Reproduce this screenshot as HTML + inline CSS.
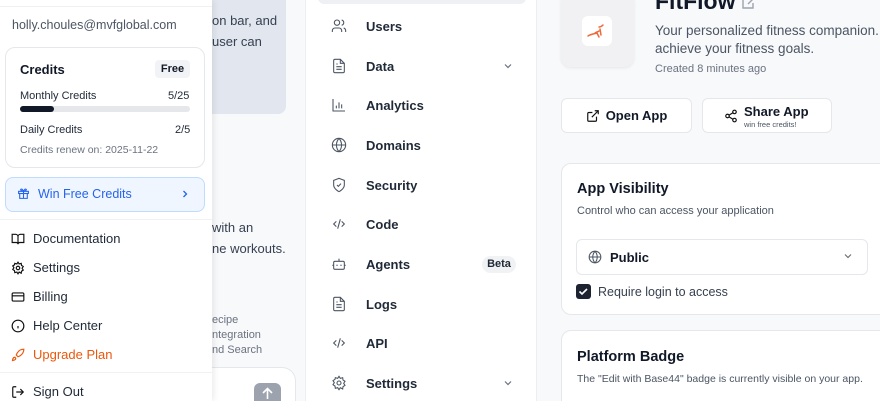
<!DOCTYPE html>
<html style="width:880px;height:401px;overflow:hidden"><head><meta charset="utf-8"><style>
*{box-sizing:border-box;margin:0;padding:0}
body{width:880px;height:401px;overflow:hidden;font-family:"Liberation Sans",sans-serif;background:#f8f9fb;position:relative;color:#111827}
.abs{position:absolute}
svg{display:block}
.menu{left:0;top:0;width:212px;height:401px;background:#fff;box-shadow:2px 0 6px rgba(0,0,0,.08)}
.nav{left:305px;top:0;width:232px;height:401px;background:#fff;border-left:1px solid #eceef1;border-right:1px solid #eceef1;overflow:hidden}
.ni{position:absolute;left:25px;display:flex;align-items:center;font-size:13px;font-weight:bold;color:#1f2937}
.ni svg{margin-right:19px}
.mi{position:absolute;left:11px;display:flex;align-items:center;font-size:13px;color:#1f2937}
.mi svg{margin-right:8px}
.card{background:#fff;border:1px solid #e5e7eb;border-radius:10px}
</style></head><body>
<!-- chat column -->
<div class="abs" style="left:212px;top:0;width:93px;height:401px;background:#f8f9fb"></div>
<div class="abs" style="left:200px;top:-10px;width:86px;height:124px;background:#e2e6ee;border-radius:8px"></div>
<div class="abs" style="left:212px;top:10px;font-size:13px;color:#374151;line-height:21px">on bar, and<br>user can</div>
<div class="abs" style="left:212px;top:217px;font-size:13px;color:#374151;line-height:21px">with an<br>ne workouts.</div>
<div class="abs" style="left:212px;top:313px;font-size:11px;color:#6b7280;line-height:15px">ecipe<br>ntegration<br>nd Search</div>
<div class="abs" style="left:190px;top:367px;width:106px;height:50px;background:#fff;border:1px solid #e5e7eb;border-radius:14px"></div>
<div class="abs" style="left:254px;top:383px;width:27px;height:27px;background:#9ca3af;border-radius:6px"><svg width="27" height="20" viewBox="0 0 27 20"><path d="M13.5 6v10M9 10l4.5-4.5L18 10" stroke="#fff" stroke-width="1.6" fill="none"/></svg></div>

<!-- nav -->
<div class="abs nav">
<div class="abs" style="left:12px;top:-10px;width:208px;height:14px;background:#eef0f3;border-radius:6px"></div>
<div class="ni" style="top:18px"><svg width="16" height="16" viewBox="0 0 24 24" fill="none" stroke="#4b5563" stroke-width="1.6"><circle cx="9" cy="7" r="4"/><path d="M2 21v-2a4 4 0 0 1 4-4h6a4 4 0 0 1 4 4v2M16 3.1a4 4 0 0 1 0 7.8M22 21v-2a4 4 0 0 0-3-3.9"/></svg>Users</div>
<div class="ni" style="top:58px"><svg width="16" height="16" viewBox="0 0 24 24" fill="none" stroke="#4b5563" stroke-width="1.6"><path d="M14 2H6a2 2 0 0 0-2 2v16a2 2 0 0 0 2 2h12a2 2 0 0 0 2-2V8z"/><path d="M14 2v6h6M8 13h8M8 17h8M8 9h2"/></svg>Data</div>
<svg class="abs" style="left:197px;top:61px" width="10" height="10" viewBox="0 0 10 10"><path d="M2 3.5l3 3 3-3" stroke="#6b7280" fill="none" stroke-width="1.2"/></svg>
<div class="ni" style="top:97px"><svg width="16" height="16" viewBox="0 0 24 24" fill="none" stroke="#4b5563" stroke-width="1.6"><path d="M3 3v18h18M8 17v-4M12 17V8M16 17v-6"/></svg>Analytics</div>
<div class="ni" style="top:137px"><svg width="16" height="16" viewBox="0 0 24 24" fill="none" stroke="#4b5563" stroke-width="1.6"><circle cx="12" cy="12" r="10"/><path d="M2 12h20M12 2a15 15 0 0 1 0 20M12 2a15 15 0 0 0 0 20"/></svg>Domains</div>
<div class="ni" style="top:177px"><svg width="16" height="16" viewBox="0 0 24 24" fill="none" stroke="#4b5563" stroke-width="1.6"><path d="M12 22s8-4 8-10V5l-8-3-8 3v7c0 6 8 10 8 10z"/><path d="M9 12l2 2 4-4"/></svg>Security</div>
<div class="ni" style="top:216px"><svg width="16" height="16" viewBox="0 0 24 24" fill="none" stroke="#4b5563" stroke-width="1.6"><path d="M8 8l-4 4 4 4M16 8l4 4-4 4M14 5l-4 14"/></svg>Code</div>
<div class="ni" style="top:256px"><svg width="16" height="16" viewBox="0 0 24 24" fill="none" stroke="#4b5563" stroke-width="1.6"><rect x="4" y="8" width="16" height="12" rx="2"/><path d="M12 8V4M2 14h2M20 14h2M9 13v2M15 13v2"/></svg>Agents</div>
<div class="abs" style="left:176px;top:256px;width:34px;height:17px;background:#f1f2f4;border-radius:9px;font-size:11px;font-weight:bold;text-align:center;line-height:17px;color:#1f2937">Beta</div>
<div class="ni" style="top:296px"><svg width="16" height="16" viewBox="0 0 24 24" fill="none" stroke="#4b5563" stroke-width="1.6"><path d="M14 2H6a2 2 0 0 0-2 2v16a2 2 0 0 0 2 2h12a2 2 0 0 0 2-2V8z"/><path d="M14 2v6h6M8 13h8M8 17h8M8 9h2"/></svg>Logs</div>
<div class="ni" style="top:335px"><svg width="16" height="16" viewBox="0 0 24 24" fill="none" stroke="#4b5563" stroke-width="1.6"><path d="M8 8l-4 4 4 4M16 8l4 4-4 4M14 5l-4 14"/></svg>API</div>
<div class="ni" style="top:375px"><svg width="16" height="16" viewBox="0 0 24 24" fill="none" stroke="#4b5563" stroke-width="1.6"><circle cx="12" cy="12" r="3"/><path d="M12 2l2 3 3.5-1 .5 3.5 3 2-2 3 2 3-3 2-.5 3.5L14 19l-2 3-2-3-3.5 1L6 16.5l-3-2 2-3-2-3 3-2L6.5 4 10 5z"/></svg>Settings</div>
<svg class="abs" style="left:197px;top:378px" width="10" height="10" viewBox="0 0 10 10"><path d="M2 3.5l3 3 3-3" stroke="#6b7280" fill="none" stroke-width="1.2"/></svg>
</div>

<!-- main -->
<div class="abs" style="left:561px;top:-8px;width:73px;height:75px;background:#f1f1f3;border-radius:10px;box-shadow:0 1px 3px rgba(0,0,0,.08)"></div>
<div class="abs" style="left:582px;top:16px;width:30px;height:30px;background:#fff;border-radius:6px"><svg width="30" height="30" viewBox="0 0 30 30"><path d="M6 20c3-2 6-2 9-3M15 17l2 4M13 17c1-1 3-1 4-2M18 13l1 6M17 11c2 0 3-1 4-2" stroke="#ee6a3a" stroke-width="1.5" fill="none" stroke-linecap="round"/></svg></div>
<div class="abs" style="left:655px;top:-12px;font-size:23px;font-weight:bold;color:#111827">FitFlow</div>
<svg class="abs" style="left:741px;top:-4px" width="16" height="14" viewBox="0 0 16 14"><path d="M2 2h6M2 2v10h10V7M7 8l6-6" stroke="#9ca3af" stroke-width="1.4" fill="none"/></svg>
<div class="abs" style="left:655px;top:22px;font-size:13.5px;color:#4b5563;line-height:18px;white-space:nowrap">Your personalized fitness companion. Dis<br>achieve your fitness goals.</div>
<div class="abs" style="left:655px;top:63px;font-size:11px;color:#6b7280">Created 8 minutes ago</div>
<div class="abs card" style="left:561px;top:98px;width:131px;height:35px;border-radius:6px;display:flex;align-items:center;justify-content:center;font-size:13px;font-weight:bold"><svg width="14" height="14" viewBox="0 0 24 24" fill="none" stroke="#111" stroke-width="2" style="margin-right:6px"><path d="M18 13v6a2 2 0 0 1-2 2H5a2 2 0 0 1-2-2V8a2 2 0 0 1 2-2h6M15 3h6v6M10 14L21 3"/></svg>Open App</div>
<div class="abs card" style="left:702px;top:98px;width:130px;height:35px;border-radius:6px"></div>
<svg class="abs" style="left:724px;top:109px" width="14" height="14" viewBox="0 0 24 24" fill="none" stroke="#111" stroke-width="2"><circle cx="18" cy="5" r="3"/><circle cx="6" cy="12" r="3"/><circle cx="18" cy="19" r="3"/><path d="M8.6 13.5l6.8 4M15.4 6.5l-6.8 4"/></svg>
<div class="abs" style="left:744px;top:104px;font-size:13px;font-weight:bold">Share App</div>
<div class="abs" style="left:744px;top:120px;font-size:7.5px;color:#4b5563">win free credits!</div>

<div class="abs card" style="left:561px;top:163px;width:330px;height:152px"></div>
<div class="abs" style="left:577px;top:181px;font-size:14.5px;font-weight:bold">App Visibility</div>
<div class="abs" style="left:577px;top:205px;font-size:11px;color:#4b5563">Control who can access your application</div>
<div class="abs" style="left:576px;top:239px;width:292px;height:36px;background:#fff;border:1px solid #e5e7eb;border-radius:6px"></div>
<svg class="abs" style="left:588px;top:250px" width="14" height="14" viewBox="0 0 24 24" fill="none" stroke="#4b5563" stroke-width="1.8"><circle cx="12" cy="12" r="10"/><path d="M2 12h20M12 2a15 15 0 0 1 0 20M12 2a15 15 0 0 0 0 20"/></svg>
<div class="abs" style="left:610px;top:250px;font-size:13px;font-weight:bold">Public</div>
<svg class="abs" style="left:843px;top:251px" width="10" height="10" viewBox="0 0 10 10"><path d="M2 3.5l3 3 3-3" stroke="#6b7280" fill="none" stroke-width="1.2"/></svg>
<div class="abs" style="left:576px;top:284px;width:15px;height:15px;background:#1e2332;border-radius:3px"><svg width="15" height="15" viewBox="0 0 15 15"><path d="M3.5 7.5l2.5 2.5 5-5" stroke="#fff" stroke-width="1.6" fill="none"/></svg></div>
<div class="abs" style="left:598px;top:285px;font-size:12.5px;color:#374151">Require login to access</div>

<div class="abs card" style="left:561px;top:330px;width:330px;height:90px"></div>
<div class="abs" style="left:577px;top:349px;font-size:14.5px;font-weight:bold">Platform Badge</div>
<div class="abs" style="left:577px;top:373px;font-size:10.5px;color:#4b5563">The "Edit with Base44" badge is currently visible on your app.</div>

<!-- dropdown menu -->
<div class="abs menu">
<div class="abs" style="left:0;top:6px;width:212px;border-top:1px solid #f0f1f3"></div>
<div class="abs" style="left:12px;top:18px;font-size:12.5px;color:#4b5563">holly.choules@mvfglobal.com</div>
<div class="abs card" style="left:5px;top:47px;width:200px;height:121px"></div>
<div class="abs" style="left:20px;top:62px;font-size:13px;font-weight:bold;color:#111827">Credits</div>
<div class="abs" style="left:155px;top:60px;width:35px;height:18px;background:#f1f3f6;border-radius:4px;font-size:11px;font-weight:bold;text-align:center;line-height:18px">Free</div>
<div class="abs" style="left:20px;top:90px;font-size:11px;color:#1f2937">Monthly Credits</div>
<div class="abs" style="left:168px;top:90px;font-size:11px;color:#1f2937">5/25</div>
<div class="abs" style="left:20px;top:106px;width:170px;height:6px;background:#e5e7eb;border-radius:3px"><div style="width:34px;height:6px;background:#111827;border-radius:3px"></div></div>
<div class="abs" style="left:20px;top:124px;font-size:11px;color:#1f2937">Daily Credits</div>
<div class="abs" style="left:175px;top:124px;font-size:11px;color:#1f2937">2/5</div>
<div class="abs" style="left:20px;top:144px;font-size:10.5px;color:#6b7280">Credits renew on: 2025-11-22</div>
<div class="abs" style="left:5px;top:177px;width:200px;height:35px;background:#eff6ff;border:1px solid #bfdbfe;border-radius:8px"></div>
<svg class="abs" style="left:17px;top:187px" width="13" height="13" viewBox="0 0 24 24" fill="none" stroke="#2563eb" stroke-width="2"><rect x="3" y="8" width="18" height="4"/><path d="M5 12v9h14v-9M12 8v13M12 8S10 3 7.5 4 9 8 12 8zM12 8s2-5 4.5-4S15 8 12 8z"/></svg>
<div class="abs" style="left:38px;top:187px;font-size:12.5px;color:#2563eb">Win Free Credits</div>
<svg class="abs" style="left:180px;top:189px" width="10" height="10" viewBox="0 0 10 10"><path d="M3.5 2l3 3-3 3" stroke="#2563eb" fill="none" stroke-width="1.3"/></svg>
<div class="abs" style="left:0;top:219px;width:212px;border-top:1px solid #f0f1f3"></div>
<div class="mi" style="top:231px"><svg width="14" height="14" viewBox="0 0 24 24" fill="none" stroke="#111" stroke-width="2"><path d="M2 4h6a4 4 0 0 1 4 4v13a3 3 0 0 0-3-3H2zM22 4h-6a4 4 0 0 0-4 4v13a3 3 0 0 1 3-3h7z"/></svg>Documentation</div>
<div class="mi" style="top:260px"><svg width="14" height="14" viewBox="0 0 24 24" fill="none" stroke="#111" stroke-width="2"><circle cx="12" cy="12" r="3"/><path d="M12 2l2 3 3.5-1 .5 3.5 3 2-2 3 2 3-3 2-.5 3.5L14 19l-2 3-2-3-3.5 1L6 16.5l-3-2 2-3-2-3 3-2L6.5 4 10 5z"/></svg>Settings</div>
<div class="mi" style="top:289px"><svg width="14" height="14" viewBox="0 0 24 24" fill="none" stroke="#111" stroke-width="2"><rect x="2" y="5" width="20" height="14" rx="2"/><path d="M2 10h20"/></svg>Billing</div>
<div class="mi" style="top:318px"><svg width="14" height="14" viewBox="0 0 24 24" fill="none" stroke="#111" stroke-width="2"><circle cx="12" cy="12" r="10"/><path d="M12 16v-4M12 8h.01"/></svg>Help Center</div>
<div class="mi" style="top:347px;color:#ea580c"><svg width="14" height="14" viewBox="0 0 24 24" fill="none" stroke="#ea580c" stroke-width="2"><path d="M4.5 16.5c-1.5 1.3-2 5-2 5s3.7-.5 5-2c.7-.8.7-2.1-.1-2.9a2.2 2.2 0 0 0-2.9-.1zM12 15l-3-3a22 22 0 0 1 2-4A13 13 0 0 1 22 2c0 2.7-.8 7.5-6 11a22 22 0 0 1-4 2z"/></svg>Upgrade Plan</div>
<div class="abs" style="left:0;top:372px;width:212px;border-top:1px solid #f0f1f3"></div>
<div class="mi" style="top:384px"><svg width="14" height="14" viewBox="0 0 24 24" fill="none" stroke="#111" stroke-width="2"><path d="M9 21H5a2 2 0 0 1-2-2V5a2 2 0 0 1 2-2h4M16 17l5-5-5-5M21 12H9"/></svg>Sign Out</div>
</div>
</body></html>
